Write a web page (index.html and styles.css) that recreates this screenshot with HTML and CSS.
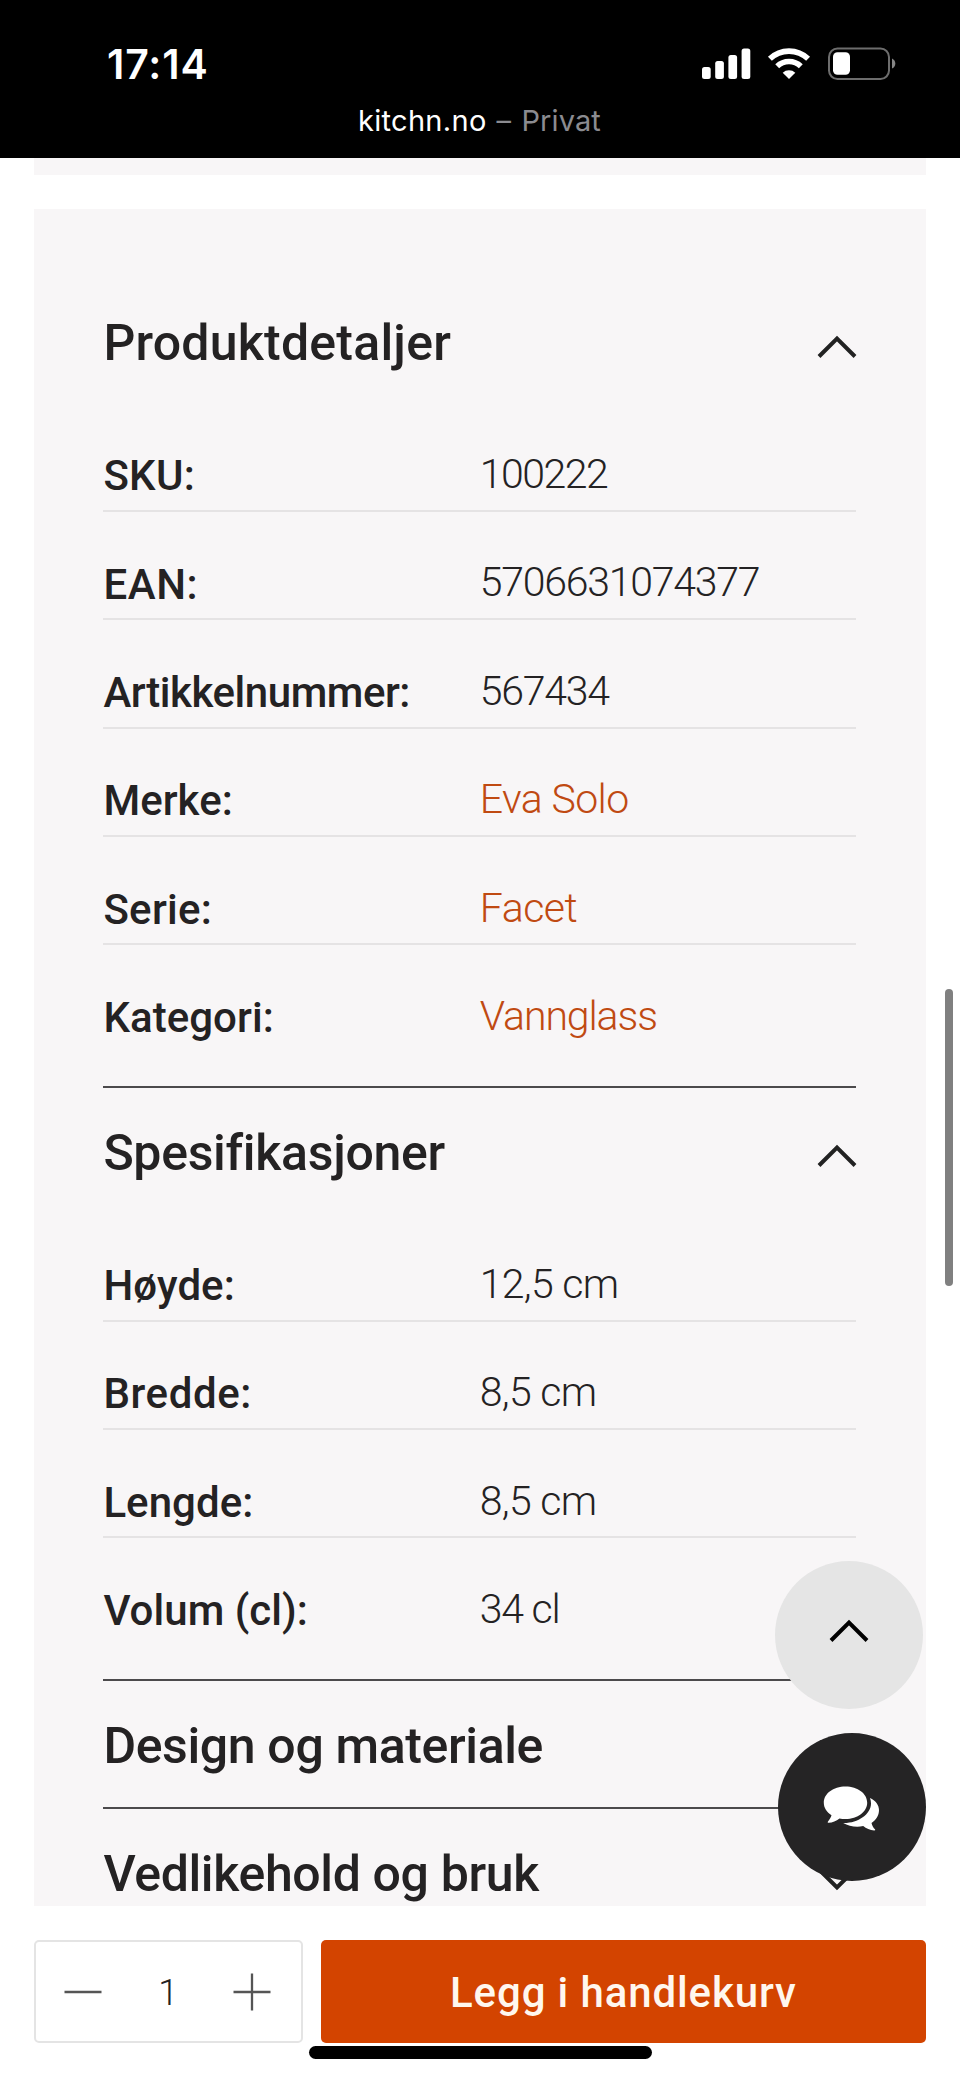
FILE: index.html
```html
<!DOCTYPE html>
<html lang="no">
<head>
<meta charset="utf-8">
<title>Produktdetaljer</title>
<link rel="stylesheet" href="styles.css">
</head>
<body>
<header class="browser">
  <div class="status">
    <span class="clock">17:14</span>
    <svg class="indicators" width="194" height="34" viewBox="702 47 194 34">
      <g fill="#fff">
        <rect x="702" y="67" width="8.7" height="12" rx="2.5"/>
        <rect x="715.2" y="61" width="8.7" height="18" rx="2.5"/>
        <rect x="728.4" y="55" width="8.7" height="24" rx="2.5"/>
        <rect x="741.6" y="48.5" width="8.7" height="30.5" rx="2.5"/>
        <path d="M789 79l-6.3-6.3a9.2 9.2 0 0 1 12.6 0z"/>
      </g>
      <g fill="none" stroke="#fff" stroke-width="5.6">
        <path d="M777.2 66.3a17 17 0 0 1 23.6 0"/>
        <path d="M769.9 58.8a27.5 27.5 0 0 1 38.2 0"/>
      </g>
      <rect x="829" y="48.5" width="60" height="30.5" rx="8.5" fill="none" stroke="#6d6d6d" stroke-width="2"/>
      <rect x="833" y="52.3" width="17" height="22.5" rx="4.5" fill="#fff"/>
      <path d="M892 58.5q3.3 1.5 3.3 5t-3.3 5z" fill="#858585"/>
    </svg>
  </div>
  <div class="address"><span class="host">kitchn.no</span><span class="dash">–</span><span class="mode">Privat</span></div>
</header>

<main class="page">
  <div class="previous"></div>
  <div class="panel">
    <section class="section first">
      <h2 class="title"><span class="t-details">Produktdetaljer</span><svg class="chev" viewBox="0 0 40 24"><path d="M2 21.5 20 3.5l18 18"/></svg></h2>
      <dl class="rows">
        <div class="row"><dt class="k-sku">SKU:</dt><dd class="n-sku">100222</dd></div>
        <div class="row"><dt class="k-ean">EAN:</dt><dd>5706631074377</dd></div>
        <div class="row"><dt class="k-art">Artikkelnummer:</dt><dd>567434</dd></div>
        <div class="row"><dt>Merke:</dt><dd class="link v-brand">Eva Solo</dd></div>
        <div class="row"><dt class="k-sku">Serie:</dt><dd class="link v-series">Facet</dd></div>
        <div class="row"><dt>Kategori:</dt><dd class="link v-cat">Vannglass</dd></div>
      </dl>
    </section>
    <section class="section">
      <h2 class="title"><span class="t-specs">Spesifikasjoner</span><svg class="chev" viewBox="0 0 40 24"><path d="M2 21.5 20 3.5l18 18"/></svg></h2>
      <dl class="rows">
        <div class="row"><dt>Høyde:</dt><dd class="v-len">12,5 cm</dd></div>
        <div class="row"><dt class="k-width">Bredde:</dt><dd class="v-len">8,5 cm</dd></div>
        <div class="row"><dt>Lengde:</dt><dd class="v-len">8,5 cm</dd></div>
        <div class="row"><dt>Volum (cl):</dt><dd>34 cl</dd></div>
      </dl>
    </section>
    <section class="section">
      <h2 class="title closed"><span class="t-more">Design og materiale</span><svg class="chev" viewBox="0 0 40 24"><path d="m2 2.5 18 18 18-18"/></svg></h2>
    </section>
    <section class="section">
      <h2 class="title closed"><span class="t-more">Vedlikehold og bruk</span><svg class="chev" viewBox="0 0 40 24"><path d="m2 2.5 18 18 18-18"/></svg></h2>
    </section>
  </div>
</main>

<footer class="buybar">
  <div class="qty">
    <svg width="38" height="38" viewBox="0 0 38 38"><path d="M.5 19h37"/></svg>
    <span class="count">1</span>
    <svg width="38" height="38" viewBox="0 0 38 38"><path d="M.5 19h37M19 .5v37"/></svg>
  </div>
  <button class="buy">Legg i handlekurv</button>
</footer>

<div class="scrollbar"></div>
<button class="fab top"><svg class="chev" viewBox="0 0 40 24"><path d="M2 21.5 20 3.5l18 18"/></svg></button>
<button class="fab chat">
  <svg width="57" height="46" viewBox="823 1786 57 46">
    <path fill="#fff" d="M870 1798c5.500 2.500 9 7 9 12 0 5.500-3 10-7.500 13 .7 3 2 5 3.500 6.200.5.800 0 1.300-.8 1.200-4.200-.2-8-1.800-11-4.300-7 1.400-14.500.2-20-3.100 14 .5 27.800-8.500 27.800-19.500 0-2-.3-3.800-1-5.500z"/>
    <path fill="#fff" d="M845.500 1786.500c12.200 0 21.700 7.200 21.700 16.200s-9.500 16.300-21.700 16.300c-2.200 0-4.200-.2-6-.6-3.300 2.500-7 4.100-10.800 4.300-.9.100-1.300-.5-.7-1.300 1.500-1.700 2.800-3.800 3.500-6.200-4.700-3-7.700-7.500-7.700-12.500 0-9 9.500-16.200 21.700-16.200z"/>
  </svg>
</button>
<div class="home"></div>
</body>
</html>
```
FILE: styles.css
```css
* { box-sizing: border-box; margin: 0; padding: 0; }
body {
  position: relative;
  width: 960px;
  height: 2078px;
  overflow: hidden;
  display: flex;
  flex-direction: column;
  background: #fff;
  color: #242223;
  font-family: Roboto, "Liberation Sans", sans-serif;
}
button { border: 0; font: inherit; }

/* Browser chrome */
.browser {
  flex: none;
  height: 158.4px;
  background: #000;
  color: #fff;
  font-family: Inter, "Liberation Sans", sans-serif;
}
.status {
  display: flex;
  justify-content: space-between;
  padding: 39px 64px 0 107px;
  height: 100px;
}
.clock { font-size: 41px; font-weight: 600; line-height: 50px; letter-spacing: .88px; }
.indicators { margin-top: 8px; }
.address {
  display: flex;
  padding-left: 358px;
  font-size: 29px;
  line-height: 42px;
  letter-spacing: .3px;
}
.host { width: 138.5px; }
.dash { width: 25px; color: #8b8b90; }
.mode { color: #8b8b90; letter-spacing: .1px; }

/* Product panel */
.page { flex: none; height: 1747.6px; padding: 0 34.5px 0 34px; overflow: hidden; }
.previous { height: 16.2px; margin-bottom: 34.5px; background: #f8f6f7; }
.panel { height: 1700px; padding: 0 69.5px 0 69.4px; background: #f8f6f7; }
.section + .section { border-top: 2px solid #4c4a4c; }
.title {
  display: flex;
  justify-content: space-between;
  height: 125.4px;
  padding-top: 35px;
  font-size: 50px;
  font-weight: 500;
  line-height: 60px;
}
.first .title { height: 194.3px; padding-top: 104px; }
.title.closed { height: 125.9px; }
.chev {
  width: 40px;
  height: 24px;
  margin: 21.5px -1px 0 0;
  fill: none;
  stroke: #222;
  stroke-width: 4;
}
.title.closed .chev { margin-top: 23px; }
.t-details { letter-spacing: .22px; }
.t-specs { letter-spacing: -.3px; }
.t-more { letter-spacing: -.36px; }

.row {
  display: grid;
  grid-template-columns: 376.4px 1fr;
  height: 108.4px;
  border-bottom: 2px solid #e5e3e4;
  line-height: 50px;
}
.row:last-child { height: 140.5px; border-bottom: 0; }
dt { padding-top: 47.8px; font-size: 42px; font-weight: 500; letter-spacing: .05px; white-space: nowrap; }
dd { padding-top: 45.6px; font-size: 41px; font-weight: 300; letter-spacing: -1.25px; }
.k-sku { letter-spacing: .3px; }
.k-ean { letter-spacing: .6px; }
.k-art { letter-spacing: -.45px; }
.k-width { letter-spacing: .6px; }
.link { color: #c04a12; }
.n-sku { letter-spacing: -1.5px; }
.v-brand { letter-spacing: -.62px; }
.v-series { letter-spacing: -.5px; }
.v-cat { letter-spacing: -1.1px; }
.v-len { letter-spacing: -.72px; }

/* Purchase bar */
.buybar {
  display: grid;
  grid-template-columns: 268.5px 605px;
  gap: 18px;
  height: 103px;
  margin: 34.3px 34.5px 0 34.4px;
}
.qty {
  display: flex;
  align-items: center;
  justify-content: space-between;
  padding: 0 30px 0 28px;
  border: 2px solid #e4e4e4;
  border-radius: 5px;
}
.qty svg { fill: none; stroke: #555; stroke-width: 2.3; }
.count { padding: 3px 0 0 1px; font-size: 36px; font-weight: 300; line-height: 40px; }
.buy {
  padding-top: 2px;
  border-radius: 5px;
  background: #d34400;
  color: #fff7ee;
  font-size: 42px;
  font-weight: 500;
  letter-spacing: .87px;
  line-height: 50px;
}

/* Overlays */
.scrollbar { position: absolute; left: 945px; top: 989px; width: 8px; height: 297px; border-radius: 4px; background: #808080; }
.fab {
  position: absolute;
  width: 148px;
  height: 148px;
  border-radius: 50%;
  display: flex;
  align-items: center;
  justify-content: center;
}
.top { left: 775px; top: 1560.5px; background: #e5e5e5; }
.top .chev { margin: -8px 0 0; stroke: #000; }
.chat { left: 777.5px; top: 1733px; background: #252425; }
.chat svg { margin: 3px 0 0; }
.home { position: absolute; left: 309px; top: 2046px; width: 343px; height: 12.5px; border-radius: 7px; background: #000; }
```
